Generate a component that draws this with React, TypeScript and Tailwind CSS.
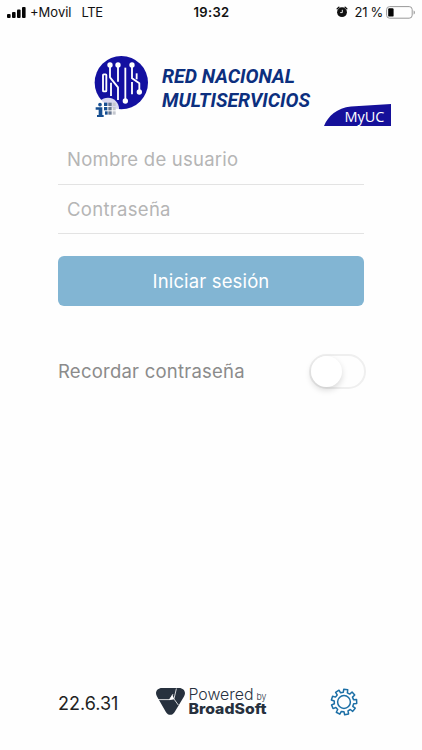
import React, { useState } from 'react';

const StatusBar = () => (
  <header className="h-6 w-full flex items-center justify-between pl-[7px] pr-[6px] text-[13px] leading-6 text-[#111]">
    <div className="w-[150px] flex items-center">
      <svg width="19" height="11" viewBox="0 0 19 11" fill="#050505">
        <rect x="0" y="7" width="3.6" height="4" rx="1" />
        <rect x="5" y="5" width="3.6" height="6" rx="1" />
        <rect x="10" y="2.6" width="3.6" height="8.4" rx="1" />
        <rect x="15" y="0" width="3.6" height="11" rx="1" />
      </svg>
      <span className="ml-1">+Movil</span>
      <span className="ml-[10px] tracking-[-0.4px]">LTE</span>
    </div>
    <span className="font-semibold tracking-[0.35px]">19:32</span>
    <div className="w-[150px] flex items-center justify-end">
      <svg width="12" height="12" viewBox="0 0 12 12">
        <circle cx="6" cy="6.2" r="4.9" fill="#111" />
        <path d="M1.2 2.7 2.9 1.3M10.8 2.7 9.1 1.3" stroke="#111" strokeWidth="1.4" strokeLinecap="round" />
        <path d="M6.3 3.8v2.8H4.2" fill="none" stroke="#fff" strokeWidth="0.9" />
      </svg>
      <span className="ml-[7px] tracking-[-0.3px]">21 %</span>
      <svg className="ml-[3px]" width="30" height="13" viewBox="0 0 30 13">
        <rect x="0.6" y="0.6" width="25.6" height="11.6" rx="3" fill="none" stroke="#999" strokeWidth="1" />
        <rect x="2.2" y="2.2" width="5.4" height="8.4" rx="1.2" fill="#050505" />
        <path d="M27.6 4.4c1.7.5 1.7 3.5 0 4z" fill="#999" />
      </svg>
    </div>
  </header>
);

const BrandLogo = () => (
  <svg width="309" height="76" viewBox="86 50 309 76">
    <g transform="translate(86 50) scale(.3333)">
      <circle cx="106" cy="98" r="80" fill="#1310a0" />
      <g fill="none" stroke="#fff" strokeWidth="5.5" strokeLinejoin="round">
        <rect x="51" y="73" width="10" height="51" rx="2" />
        <path d="M72 45v37l24 30v38" />
        <path d="M75 98v40" />
        <path d="M96 45v50" />
        <path d="M118 53v100" />
        <path d="M138 45v40l22 15v26" />
        <path d="M138 96v37" />
        <path d="M152 70v18" />
      </g>
      <g fill="#fff">
        <circle cx="72" cy="45" r="8" />
        <circle cx="96" cy="45" r="8" />
        <circle cx="138" cy="45" r="8" />
        <circle cx="118" cy="153" r="8" />
        <circle cx="160" cy="126" r="8" />
      </g>
      <circle cx="66" cy="176" r="33" fill="#fff" opacity=".84" />
      <g fill="#174f91">
        <circle cx="42" cy="164" r="5.5" />
        <path d="M29 172h20v23h4v6H33v-6h5v-16h-9z" />
        <rect x="54" y="158" width="10" height="10" />
        <rect x="54" y="171" width="10" height="10" />
        <rect x="57" y="184" width="8" height="10" />
      </g>
      <g fill="#66758f">
        <rect x="67" y="158" width="10" height="10" />
        <rect x="67" y="171" width="10" height="10" />
        <rect x="67" y="184" width="10" height="10" />
      </g>
      <g fill="#c4c7cf">
        <rect x="80" y="158" width="9" height="10" />
        <rect x="80" y="171" width="9" height="10" />
        <rect x="80" y="184" width="9" height="10" />
      </g>
    </g>
    <g fill="#0c2f7e" fontFamily="Roboto, sans-serif" fontSize="20" fontWeight="700" fontStyle="italic">
      <text x="162" y="83" textLength="133" lengthAdjust="spacingAndGlyphs">RED NACIONAL</text>
      <text x="162" y="107.3" textLength="148" lengthAdjust="spacingAndGlyphs">MULTISERVICIOS</text>
    </g>
    <path d="M324 126C328 116 337 108 351 106.5L391 104v22z" fill="#15109a" />
    <text x="344.5" y="121.6" fill="#fff" fontFamily="Open Sans, sans-serif" fontSize="13.8" textLength="40" lengthAdjust="spacingAndGlyphs">MyUC</text>
  </svg>
);

const BroadSoftLogo = () => (
  <svg width="112" height="42" viewBox="155 682 112 42">
    <path d="M162 689h17c5 0 7.5 4.5 5 8.5l-9.5 15.7c-2 3.4-6.5 3.4-8.5 0L157 697.5c-2.5-4 0-8.5 5-8.5z" fill="#27313e" />
    <path d="M158 700.6h11.500l4.500-.8 2.400-10.300M173.600 699.500l4.700 6.500M169.500 700.600l3.500-5.500" fill="none" stroke="#fff" strokeWidth="0.8" />
    <path d="M169 701l3.4-5.200 1.700 4.300z" fill="#fff" />
    <g fill="#27313e" fontFamily="Inter, sans-serif">
      <text x="188.5" y="701" fontSize="15.3" fontWeight="300" textLength="65" lengthAdjust="spacingAndGlyphs">Powered</text>
      <text x="256.5" y="701" fontSize="9.5" fontWeight="300" textLength="10" lengthAdjust="spacingAndGlyphs">by</text>
      <text x="188.5" y="715.3" fontSize="14.6" fontWeight="800" textLength="78" lengthAdjust="spacingAndGlyphs">BroadSoft</text>
    </g>
  </svg>
);

const polar = (r: number, deg: number) => {
  const a = (deg * Math.PI) / 180;
  return `${(r * Math.cos(a)).toFixed(2)} ${(r * Math.sin(a)).toFixed(2)}`;
};

// nine teeth, each one is up - across - down - along the rim
const gearPath =
  'M' +
  Array.from({ length: 9 }, (_, i) => {
    const c = i * 40 - 82;
    return [polar(9.8, c - 12), polar(12.8, c - 9), polar(12.8, c + 9), polar(9.8, c + 12)].join('L');
  }).join('L') +
  'Z';

const GearIcon = () => (
  <svg width="28" height="28" viewBox="-14 -14 28 28" fill="none" stroke="#1c6fa6" strokeWidth="1.5" strokeLinejoin="round">
    <circle r="6.4" />
    <path d={gearPath} />
  </svg>
);

export default function App() {
  const [remember, setRemember] = useState(false);

  return (
    <div className="w-[422px] h-[750px] bg-[#fefefe] flex flex-col overflow-hidden font-['Inter',sans-serif]">
      <StatusBar />

      <div className="mt-[26px] pl-[86px]">
        <BrandLogo />
      </div>

      <form className="mt-[9px] ml-[58px] w-[306px] flex flex-col" onSubmit={(e) => e.preventDefault()}>
        <input
          type="text"
          placeholder="Nombre de usuario"
          className="h-[50px] px-[9px] pb-[2px] text-[18.5px] tracking-[0.23px] border-b border-[#e3e3e3] outline-none placeholder:text-[#b5b5b5]"
        />
        <input
          type="password"
          placeholder="Contraseña"
          className="h-[49px] px-[9px] text-[18.5px] tracking-[0.3px] border-b border-[#e3e3e3] outline-none placeholder:text-[#b5b5b5]"
        />
        <button type="submit" className="mt-[22px] pt-px h-[50px] rounded-md bg-[#82b5d3] text-white text-[18.5px] tracking-[0.15px]">
          Iniciar sesión
        </button>

        <div className="mt-12 w-[308px] flex items-center justify-between">
          <span className="text-[18.5px] tracking-[0.23px] text-[#8b8b8b]">Recordar contraseña</span>
          <button
            type="button"
            role="switch"
            aria-checked={remember}
            onClick={() => setRemember(!remember)}
            className={`w-[57px] h-[35px] rounded-full border-2 flex items-center ${
              remember ? 'justify-end bg-[#82b5d3] border-[#82b5d3]' : 'justify-start border-[#efefef]'
            }`}
          >
            <span className="size-[31px] rounded-full bg-white shadow-[0_3px_6px_rgba(0,0,0,0.15)]"></span>
          </button>
        </div>
      </form>

      <footer className="mt-auto mb-[27px] pl-[58px] pr-[64px] h-[42px] flex items-center">
        <span className="w-[97px] pt-[2px] text-[18px] text-[#222]">22.6.31</span>
        <BroadSoftLogo />
        <button type="button" className="ml-auto">
          <GearIcon />
        </button>
      </footer>
    </div>
  );
}
